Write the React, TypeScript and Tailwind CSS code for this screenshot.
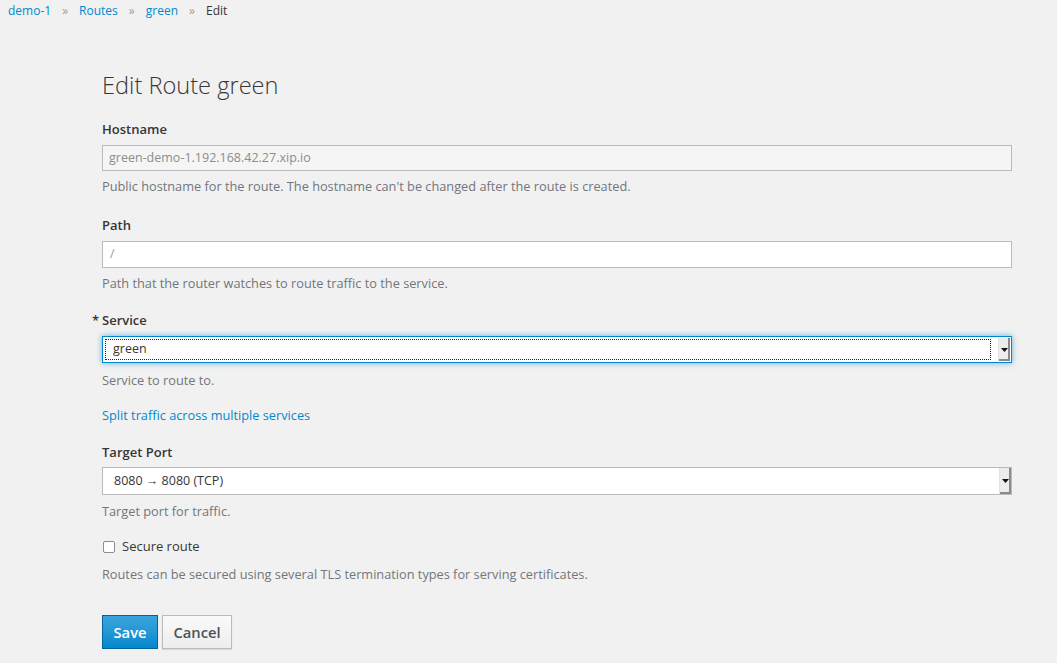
import React from 'react';

const font = { fontFamily: '"Open Sans", "Noto Sans", sans-serif' };

const SelectArrow: React.FC = () => (
  <div className="flex h-full w-[12px] items-center justify-center border-l border-[#e3e3e3] bg-[#ececec] shadow-[inset_-2px_-2px_0_#8a8a8a]">
    <svg width="7" height="4" viewBox="0 0 7 4">
      <path d="M0 0h7L3.5 4z" fill="#111" />
    </svg>
  </div>
);

interface FieldProps {
  label: string;
  required?: boolean;
  help: string;
  className?: string;
  labelClass?: string;
  helpClass?: string;
  children: React.ReactNode;
}

const Field: React.FC<FieldProps> = ({
  label,
  required,
  help,
  className = 'mb-[22px]',
  labelClass = 'mb-[7px]',
  helpClass = 'mt-[7px]',
  children
}) => (
  <div className={className}>
    <label className={`relative block text-[13px] font-semibold leading-[17px] text-[#363636] ${labelClass}`}>
      {required && <span className="absolute -left-[10px]">*</span>}
      {label}
    </label>
    {children}
    <p className={`text-[12.75px] leading-[17px] text-[#72767b] ${helpClass}`}>{help}</p>
  </div>
);

export default function App() {
  return (
    <div className="min-h-[663px] bg-[#f1f1f1]" style={font}>
      {/* Breadcrumb */}
      <div className="flex items-center px-[8px] pt-[2px] text-[12px] leading-[17px]">
        <span className="text-[#0088ce]">demo-1</span>
        <span className="mx-[11px] text-[#9c9c9c]">»</span>
        <span className="text-[#0088ce]">Routes</span>
        <span className="mx-[11px] text-[#9c9c9c]">»</span>
        <span className="text-[#0088ce]">green</span>
        <span className="mx-[11px] text-[#9c9c9c]">»</span>
        <span className="text-[#363636]">Edit</span>
      </div>

      <div className="ml-[102px] w-[910px] pt-[51px]">
        <h1 className="mb-[21px] text-[23.6px] font-light leading-[30px] text-[#363636]">Edit Route green</h1>

        <Field label="Hostname" help="Public hostname for the route. The hostname can't be changed after the route is created.">
          <div className="flex h-[26px] items-center border border-[#bbb] bg-[#f5f5f5] px-[6px] text-[12.5px] text-[#8b8d8f]">
            green-demo-1.192.168.42.27.xip.io
          </div>
        </Field>

        <Field label="Path" help="Path that the router watches to route traffic to the service.">
          <div className="flex h-[27px] items-center border border-[#bbb] bg-white px-[7px] text-[12.5px] text-[#9c9c9c]">
            /
          </div>
        </Field>

        <Field
          label="Service"
          required
          help="Service to route to."
          className="-mt-[2px] mb-[22px]"
          helpClass="mt-[9px]"
        >
          <div className="flex h-[27px] items-stretch border border-[#0088ce] bg-white p-[1px] shadow-[0_0_6px_rgba(0,136,206,0.6)]">
            <div className="mx-[1px] my-[1px] flex flex-1 items-center border border-dotted border-[#222] pl-[7px] text-[12.5px] text-[#363636]">
              green
            </div>
            <div className="ml-[6px]">
              <SelectArrow />
            </div>
          </div>
        </Field>

        <div className="-mt-[4px] mb-[20px] text-[12.75px] leading-[17px] text-[#0088ce]">Split traffic across multiple services</div>

        <Field label="Target Port" help="Target port for traffic." labelClass="mb-[6px]" helpClass="mt-[8px]">
          <div className="flex h-[28px] items-stretch border border-[#bbb] bg-white">
            <div className="flex flex-1 items-center pl-[11px] text-[12.5px] text-[#363636]">8080 → 8080 (TCP)</div>
            <SelectArrow />
          </div>
        </Field>

        <div className="-mt-[4px] mb-[18px]">
          <label className="flex items-center gap-[7px] pl-[1px] text-[13px] leading-[17px] text-[#363636]">
            <span className="inline-block h-[12px] w-[12px] rounded-[2px] border border-[#8b8d8f] bg-white" />
            Secure route
          </label>
          <p className="mt-[11px] text-[12.75px] leading-[17px] text-[#72767b]">
            Routes can be secured using several TLS termination types for serving certificates.
          </p>
        </div>

        <div className="flex gap-[4px] pt-[14px]">
          <button className="h-[34px] w-[56px] border border-[#00659c] bg-gradient-to-b from-[#39a5dc] to-[#0088ce] text-[14.75px] font-semibold text-white">
            Save
          </button>
          <button className="h-[34px] w-[70px] border border-[#bbb] bg-gradient-to-b from-[#fafafa] to-[#ededed] text-[14.75px] font-semibold text-[#4d5258] shadow-[0_1px_1px_rgba(0,0,0,0.1)]">
            Cancel
          </button>
        </div>
      </div>
    </div>
  );
}
